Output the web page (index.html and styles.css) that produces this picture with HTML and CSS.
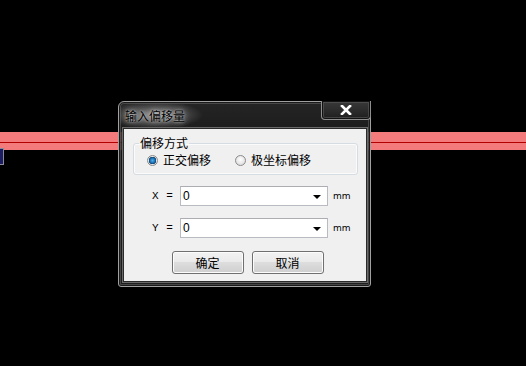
FILE: index.html
```html
<!DOCTYPE html>
<html>
<head>
<meta charset="utf-8">
<link rel="stylesheet" href="styles.css">
</head>
<body>
<div class="desk">
  <div class="band"><div class="band-line"></div></div>
  <div class="marker"></div>

  <div class="window">
    <div class="titlebar">
      <span class="title">输入偏移量</span>
      <div class="close">
        <svg width="12" height="10" viewBox="0 0 12 10"><path d="M2 1 L10 9 M10 1 L2 9" stroke="#fff" stroke-width="2.6" stroke-linecap="square"/></svg>
      </div>
    </div>
    <div class="client">
      <fieldset class="group">
        <legend>偏移方式</legend>
        <div class="radios">
          <label class="radio"><span class="dot on"></span>正交偏移</label>
          <label class="radio"><span class="dot"></span>极坐标偏移</label>
        </div>
      </fieldset>
      <div class="row">
        <span class="lbl">X =</span>
        <div class="combo"><span class="val">0</span><span class="arrow"></span></div>
        <span class="unit">mm</span>
      </div>
      <div class="row">
        <span class="lbl">Y =</span>
        <div class="combo"><span class="val">0</span><span class="arrow"></span></div>
        <span class="unit">mm</span>
      </div>
      <div class="buttons">
        <button class="btn">确定</button>
        <button class="btn">取消</button>
      </div>
    </div>
  </div>
</div>
</body>
</html>
```

FILE: styles.css
```css
html, body {
  margin: 0;
  padding: 0;
  background: #000;
}
.desk {
  position: relative;
  width: 526px;
  height: 366px;
  overflow: hidden;
  padding-top: 132px;
  box-sizing: border-box;
}
.band {
  height: 18px;
  background: #f47b7b;
  display: flex;
  flex-direction: column;
  justify-content: center;
}
.band-line {
  height: 1px;
  background: #b00000;
  margin-top: 2px;
}
.marker {
  width: 3px;
  height: 15px;
  background: #1c1c60;
  border-right: 1px solid #8a8a9a;
  border-top: 1px solid #8a8a9a;
  border-bottom: 1px solid #8a8a9a;
  margin-top: -2px;
}
.window {
  position: absolute;
  left: 118px;
  top: 101px;
  width: 253px;
  height: 186px;
  box-sizing: border-box;
  border: 1px solid #a0a0a0;
  border-radius: 6px 6px 3px 3px;
  background:
    radial-gradient(ellipse 48px 14px at 36px 13px, rgba(170,170,170,0.8), rgba(130,130,130,0.45) 55%, rgba(120,120,120,0) 100%),
    linear-gradient(rgba(46,46,46,0.8), rgba(24,24,24,0.85) 30%, rgba(40,40,40,0.75));
  box-shadow: inset 0 0 0 1px #1a1a1a, inset 0 0 0 2px rgba(110,110,110,0.5);
  padding: 0 3px 4px 4px;
  display: flex;
  flex-direction: column;
}
.titlebar {
  height: 26px;
  display: flex;
  align-items: flex-start;
  justify-content: space-between;
}
.title {
  font-family: "Noto Sans CJK SC", sans-serif;
  font-size: 12px;
  line-height: 14px;
  color: #000;
  margin-top: 7px;
  margin-left: 2px;
  text-shadow: 0 0 6px rgba(220,220,220,0.9), 0 0 2px rgba(200,200,200,0.9);
}
.close {
  width: 50px;
  height: 19px;
  margin-top: -1px;
  margin-right: -4px;
  box-sizing: border-box;
  border: 1px solid #8e8e8e;
  border-top: none;
  border-radius: 0 0 4px 4px;
  background: linear-gradient(#3a3a3a, #1e1e1e);
  box-shadow: inset 0 0 0 1px #111, inset 0 0 0 2px rgba(90,90,90,0.6);
  display: flex;
  align-items: center;
  justify-content: center;
  padding-bottom: 1px;
}
.client {
  flex: 1;
  background: #f0f0f0;
  border: 1px solid #2a2a2a;
  box-shadow: 0 0 0 1px #6a6a6a;
  padding: 6px 8px 0 9px;
  font-family: "Noto Sans CJK SC", sans-serif;
  font-size: 12px;
  color: #000;
}
.group {
  margin: 0;
  padding: 1px 6px 6px 13px;
  border: 1px solid #d6dde2;
  border-radius: 3px;
  box-shadow: inset 0 0 0 1px #fbfbfb;
}
.group legend {
  padding: 0 1px;
  margin-left: -8px;
  line-height: 16px;
  font-size: 12px;
}
.radios {
  display: flex;
  align-items: center;
  height: 16px;
}
.radio {
  display: flex;
  align-items: center;
  line-height: 16px;
}
.radio + .radio {
  margin-left: 24px;
}
.dot {
  width: 11px;
  height: 11px;
  box-sizing: border-box;
  border-radius: 50%;
  border: 1px solid #8a8a8a;
  background: radial-gradient(circle at 50% 40%, #ffffff, #d4d4d4);
  margin-right: 5px;
  position: relative;
}
.dot.on {
  background: radial-gradient(circle at 50% 50%, #4fb0e8 0, #1a6fb4 2.5px, #0e3f6e 3.5px, #e8e8e8 4px, #cfcfcf 5px);
}
.row {
  display: flex;
  align-items: center;
  height: 20px;
  margin-top: 11px;
}
.row + .row {
  margin-top: 12px;
}
.lbl {
  width: 47px;
  box-sizing: border-box;
  padding-left: 19px;
  font-family: "Liberation Mono", monospace;
  font-size: 11px;
  letter-spacing: 0.5px;
}
.combo {
  width: 148px;
  height: 20px;
  box-sizing: border-box;
  border: 1px solid #b8bcc2;
  border-top-color: #abadb3;
  background: #fff;
  display: flex;
  align-items: center;
  justify-content: space-between;
  padding: 0 6px 0 2px;
}
.val {
  font-family: "Liberation Sans", sans-serif;
  font-size: 12px;
}
.arrow {
  width: 0;
  height: 0;
  border-left: 4px solid transparent;
  border-right: 4px solid transparent;
  border-top: 4px solid #000;
  margin-top: 2px;
}
.unit {
  margin-left: 5px;
  font-family: "DejaVu Sans", sans-serif;
  font-size: 9px;
}
.buttons {
  display: flex;
  justify-content: center;
  gap: 8px;
  margin-top: 13px;
  padding-left: 4px;
}
.btn {
  width: 72px;
  height: 23px;
  box-sizing: border-box;
  border: 1px solid #707070;
  border-radius: 3px;
  background: linear-gradient(#f2f2f2, #ebebeb 45%, #dddddd 50%, #cfcfcf);
  box-shadow: inset 0 0 0 1px #fcfcfc;
  font-family: "Noto Sans CJK SC", sans-serif;
  font-size: 12px;
  color: #000;
  padding: 0;
  line-height: 20px;
}
```
